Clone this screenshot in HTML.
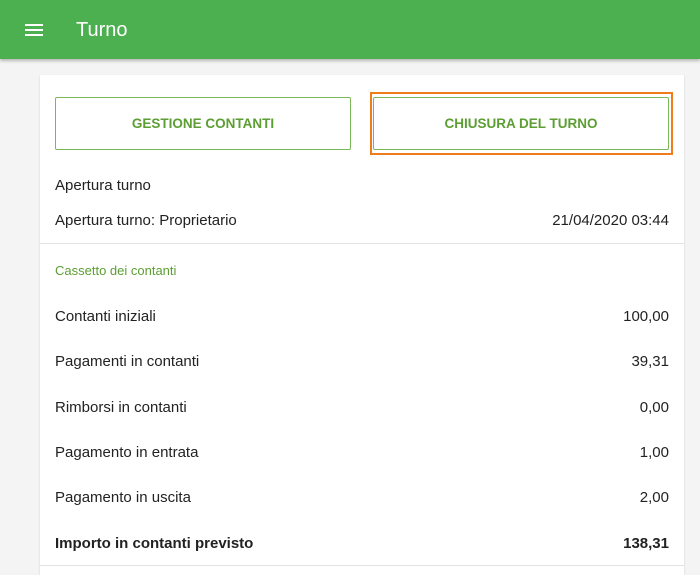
<!DOCTYPE html>
<html><head><style>
body{margin:0;width:700px;height:568px;overflow:hidden;background:#f4f4f4;font-family:"Liberation Sans",sans-serif;position:relative}
.hdr{position:absolute;left:0;top:0;width:700px;height:59px;background:#4caf50;box-shadow:0 2px 3px rgba(0,0,0,.25)}
.hdr .t{position:absolute;left:76px;top:19px;color:#fff;font-size:20px}
.ham{position:absolute;left:25px;width:18px;height:2px;background:#fff}
.card{position:absolute;left:40px;top:75px;width:644px;height:500px;background:#fff;box-shadow:0 1px 2px rgba(0,0,0,.15)}
.btn{position:absolute;top:22px;height:53px;border:1px solid #7cb85a;border-radius:2px;color:#5c9e33;font-size:13.5px;font-weight:bold;display:flex;align-items:center;justify-content:center;box-sizing:border-box}
.orange{position:absolute;left:330px;top:17px;width:303px;height:63px;border:2px solid #ef7d1c;box-sizing:border-box}
.r{position:absolute;left:15px;right:15px;font-size:15px;color:#222;display:flex;justify-content:space-between}
.hr{position:absolute;left:0;right:0;height:1px;background:#e3e3e3}
</style></head><body>
<div class="hdr"><div class="ham" style="top:24px"></div><div class="ham" style="top:29px"></div><div class="ham" style="top:34px"></div><div class="t">Turno</div></div>
<div class="card">
<div class="btn" style="left:15px;width:296px">GESTIONE CONTANTI</div>
<div class="orange"></div>
<div class="btn" style="left:333px;width:296px">CHIUSURA DEL TURNO</div>
<div class="r" style="top:102px"><span>Apertura turno</span></div>
<div class="r" style="top:137px"><span>Apertura turno: Proprietario</span><span>21/04/2020 03:44</span></div>
<div class="hr" style="top:168px"></div>
<div class="r" style="top:188px;font-size:13px;color:#5c9e33"><span>Cassetto dei contanti</span></div>
<div class="r" style="top:233px"><span>Contanti iniziali</span><span>100,00</span></div>
<div class="r" style="top:278px"><span>Pagamenti in contanti</span><span>39,31</span></div>
<div class="r" style="top:324px"><span>Rimborsi in contanti</span><span>0,00</span></div>
<div class="r" style="top:369px"><span>Pagamento in entrata</span><span>1,00</span></div>
<div class="r" style="top:414px"><span>Pagamento in uscita</span><span>2,00</span></div>
<div class="r" style="top:460px;font-weight:bold"><span>Importo in contanti previsto</span><span>138,31</span></div>
<div class="hr" style="top:490px"></div>
</div>
</body></html>
